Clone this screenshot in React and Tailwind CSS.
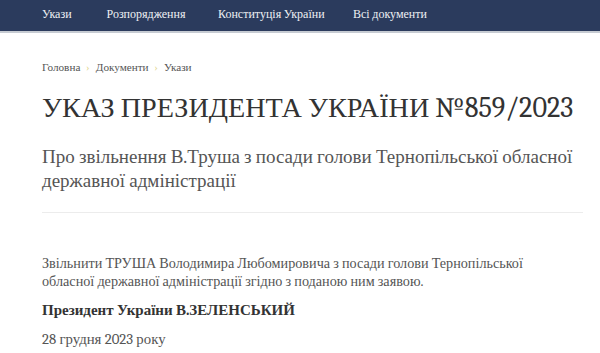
export default function App() {
    const nav = [
        { label: "Укази", w: "w-[64.5px]" },
        { label: "Розпорядження", w: "w-[111.5px]" },
        { label: "Конституція України", w: "w-[135px]" },
        { label: "Всі документи", w: "" },
    ];

    return (
        <div className="min-h-[353px] bg-white font-serif">
            <header className="h-[33px] border-b-2 border-[#c6cbd2] bg-[#2b3b5d]">
                <nav className="flex px-[42px] pt-[6px] text-[12px] leading-[16px] text-[#eef0f4]">
                    {nav.map((item) => (
                        <span key={item.label} className={item.w}>{item.label}</span>
                    ))}
                </nav>
            </header>

            <main className="px-[42px] pr-[17px]">
                <p className="mt-[27px] text-[11.2px] leading-[16px] text-[#555]">
                    Головна<span className="mx-[6px] text-[#e4d894]">›</span>Документи<span className="mx-[6px] text-[#e4d894]">›</span>Укази
                </p>

                <h1 className="mt-[14px] whitespace-nowrap text-[28.2px] leading-[36px] text-[#333]">УКАЗ ПРЕЗИДЕНТА УКРАЇНИ №859/2023</h1>

                <h2 className="mt-[19px] whitespace-nowrap text-[19px] leading-[24px] text-[#555]">
                    Про звільнення В.Труша з посади голови Тернопільської обласної
                    <br />
                    державної адміністрації
                </h2>

                <hr className="mt-[19px] border-t border-[#ececec]" />

                <p className="mt-[42px] w-[500px] text-[14.2px] leading-[18px] text-[#555]">Звільнити ТРУША Володимира Любомировича з посади голови Тернопільської обласної державної адміністрації згідно з поданою ним заявою.</p>
                <p className="mt-[10px] text-[15px] font-bold leading-[18px] text-[#333]">Президент України В.ЗЕЛЕНСЬКИЙ</p>
                <p className="mt-[12px] text-[14.8px] leading-[18px] text-[#555]">28 грудня 2023 року</p>
            </main>
        </div>
    );
}
